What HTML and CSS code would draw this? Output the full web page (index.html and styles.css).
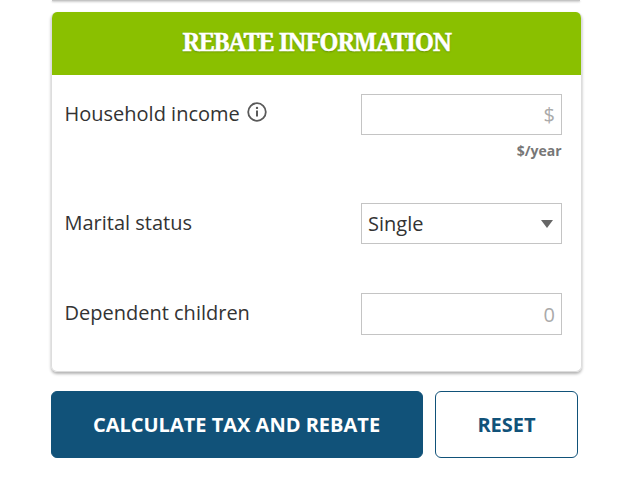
FILE: index.html
```html
<!DOCTYPE html>
<html lang="en">
<head>
    <meta charset="UTF-8">
    <meta name="viewport" content="width=device-width, initial-scale=1.0">
    <title>Rebate information</title>
    <link rel="stylesheet" href="styles.css">
</head>
<body>
    <div class="prev-card"></div>

    <form class="calculator">
        <section class="card">
            <h2 class="card-title">REBATE INFORMATION</h2>
            <div class="card-body">
                <div class="row row-income">
                    <label class="label" for="income">Household income
                        <svg class="info" viewBox="0 0 20 20" width="20" height="20">
                            <circle cx="10" cy="10" r="8.8" fill="none" stroke="#5a5a5a" stroke-width="1.8"/>
                            <path d="M10 8.4v6.2" stroke="#5a5a5a" stroke-width="2"/>
                            <circle cx="10" cy="5.9" r="1.2" fill="#5a5a5a"/>
                        </svg>
                    </label>
                    <div class="field">
                        <input class="input" id="income" type="text" placeholder="$">
                        <span class="hint">$/year</span>
                    </div>
                </div>
                <div class="row row-status">
                    <label class="label" for="status">Marital status</label>
                    <div class="select" id="status">
                        <span>Single</span>
                        <span class="arrow"></span>
                    </div>
                </div>
                <div class="row">
                    <label class="label" for="children">Dependent children</label>
                    <div class="field">
                        <input class="input input-children" id="children" type="text" placeholder="0">
                    </div>
                </div>
            </div>
        </section>

        <div class="actions">
            <button class="button primary" type="button">CALCULATE TAX AND REBATE</button>
            <button class="button reset" type="reset">RESET</button>
        </div>
    </form>
</body>
</html>
```

FILE: styles.css
```css
* {
    box-sizing: border-box;
}

body {
    margin: 0;
    height: 498px;
    overflow: hidden;
    background-color: #fff;
    font-family: "Open Sans", sans-serif;
    font-size: 20px;
    color: #333;
}

/* Bottom edge of the card above */
.prev-card {
    width: 528px;
    height: 1px;
    margin-left: 52px;
    background-color: #c4c4c4;
    box-shadow: 0 1px 2px rgba(0, 0, 0, 0.3);
}

.calculator {
    width: 531px;
    margin: 11px 0 0 51px;
}

.card {
    height: 360px;
    border: 1px solid #ddd;
    border-top: none;
    border-radius: 6px;
    overflow: hidden;
    box-shadow: 0 2px 3px rgba(0, 0, 0, 0.3);
}

.card-title {
    height: 63px;
    margin: 0;
    background-color: #8ac000;
    color: #fff;
    font-family: "Noto Serif", "DejaVu Serif", serif;
    font-size: 24.5px;
    line-height: 59px;
    letter-spacing: -1.25px;
    word-spacing: 0.5px;
    text-align: center;
    -webkit-text-stroke: 0.4px #fff;
    text-shadow: 0 1px 2px rgba(0, 0, 0, 0.25);
}

.card-body {
    padding: 19px 19px 0 12.5px;
}

.row {
    display: flex;
    justify-content: space-between;
    align-items: flex-start;
}

.row-income {
    height: 109px;
}

.row-status {
    height: 90px;
}

.label {
    display: flex;
    gap: 7.5px;
    line-height: 40px;
}

.info {
    margin-top: 8px;
}

.field {
    width: 201px;
}

.input,
.select {
    display: block;
    width: 201px;
    height: 41px;
    border: 1px solid #c4c4c4;
    background-color: #fff;
    font-family: inherit;
    font-size: 20px;
    color: #333;
}

.input {
    padding: 0 6px;
    text-align: right;
}

.input-children {
    height: 42px;
    padding-top: 1px;
}

.input::placeholder {
    color: #aaa;
}

.select {
    display: flex;
    justify-content: space-between;
    align-items: center;
    padding: 0 8px 0 6px;
}

.arrow {
    border: 6px solid transparent;
    border-top: 8px solid #666;
    border-bottom: none;
}

.hint {
    display: block;
    margin-top: 6px;
    padding-right: 0.5px;
    font-size: 14px;
    font-weight: bold;
    line-height: 19px;
    text-align: right;
    color: #777;
}

.actions {
    display: flex;
    gap: 12px;
    margin-top: 19px;
}

.button {
    height: 67px;
    padding: 0;
    border: 1px solid #115279;
    border-radius: 6px;
    font-family: inherit;
    font-size: 20px;
    font-weight: bold;
}

.primary {
    width: 372px;
    padding-right: 1px;
    background-color: #115279;
    color: #fff;
}

.reset {
    width: 143px;
    background-color: #fff;
    color: #115279;
}
```
